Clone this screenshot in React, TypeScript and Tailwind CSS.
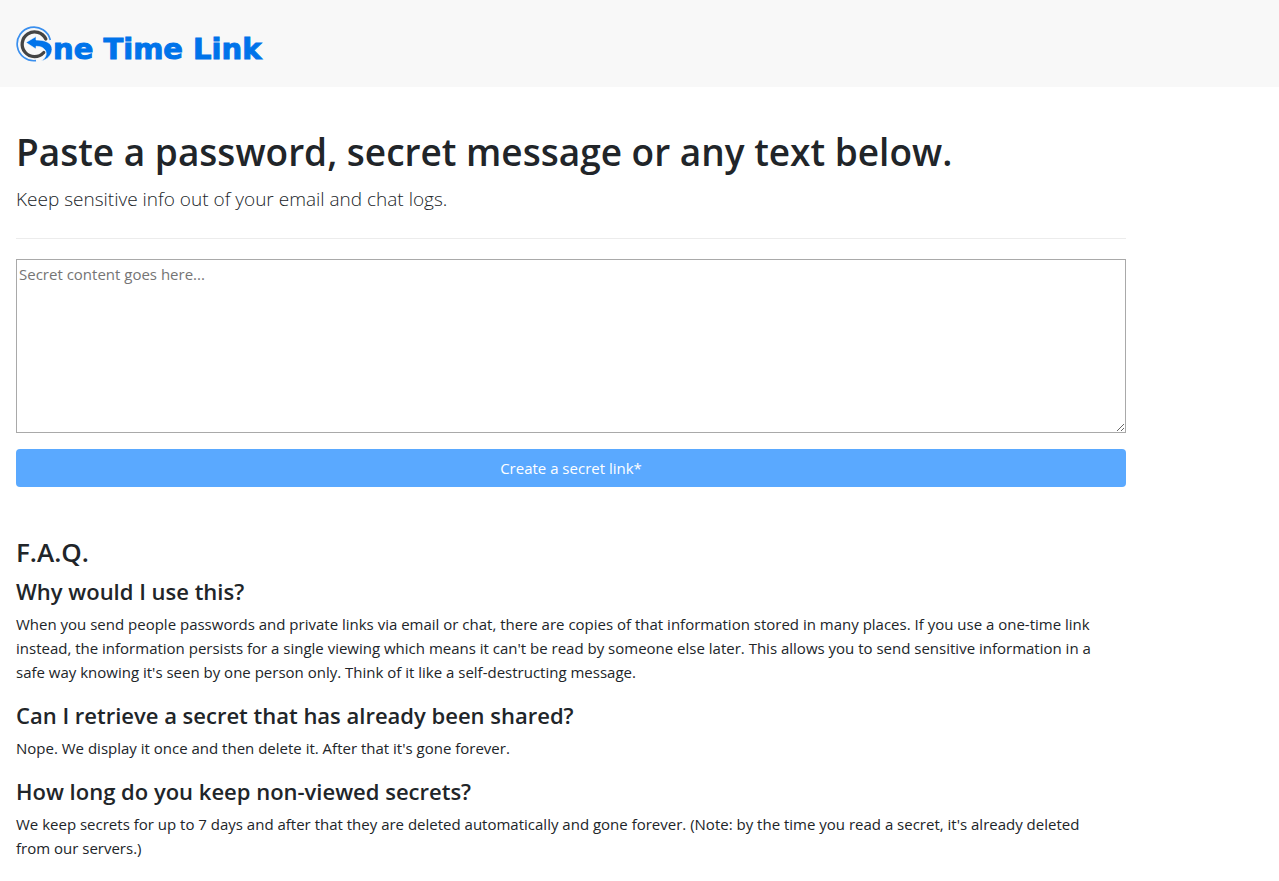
import React, { useState } from 'react';

interface Question {
  title: string;
  answer: string;
}

const questions: Question[] = [
  {
    title: 'Why would I use this?',
    answer:
      "When you send people passwords and private links via email or chat, there are copies of that information stored in many places. If you use a one-time link instead, the information persists for a single viewing which means it can't be read by someone else later. This allows you to send sensitive information in a safe way knowing it's seen by one person only. Think of it like a self-destructing message.",
  },
  {
    title: 'Can I retrieve a secret that has already been shared?',
    answer: "Nope. We display it once and then delete it. After that it's gone forever.",
  },
  {
    title: 'How long do you keep non-viewed secrets?',
    answer:
      "We keep secrets for up to 7 days and after that they are deleted automatically and gone forever. (Note: by the time you read a secret, it's already deleted from our servers.)",
  },
];

const Logo: React.FC = () => (
  <a href="/" aria-label="One Time Link" className="inline-flex items-center text-[#0073ea]">
    <svg width="37" height="38" viewBox="0 0 37 38" fill="none" aria-hidden="true">
      <path d="M34.3 15A16.8 16.8 0 1 0 20 35.6" stroke="#3a8fee" strokeWidth="1.7" />
      <path d="M29.8 14A12.4 12.4 0 1 0 27.8 27.5" stroke="#444" strokeWidth="3.3" strokeLinecap="round" />
      <path
        d="M10 17.5L20 11.5V15C28 14.8 36.5 17.5 36 24.5C35.6 30 31.5 34.5 25.5 36C30 32.8 31.5 28.5 29 25C27 22.2 24 21.3 20 21.3V24Z"
        fill="#0073ea"
        stroke="#f8f8f8"
        strokeWidth="0.6"
      />
    </svg>
    <span className="pt-2.5 font-['DejaVu_Sans',sans-serif] text-[29px] leading-8 font-bold [-webkit-text-stroke:1px_#0073ea]">
      ne Time Link
    </span>
  </a>
);

const App: React.FC = () => {
  const [secret, setSecret] = useState<string>('');

  return (
    <div className="font-['Open_Sans',sans-serif] text-[15px] leading-6 text-[#212529]">
      <header className="flex h-[87px] items-center bg-[#f8f8f8] px-4">
        <Logo />
      </header>
      <main className="box-content max-w-[1110px] px-4 pt-10 pb-5">
        <h1 className="mb-2 text-[37px] leading-[50px] font-semibold">
          Paste a password, secret message or any text below.
        </h1>
        <p className="text-[19px] leading-[29px] font-light">Keep sensitive info out of your email and chat logs.</p>
        <hr className="mt-6 mb-5 border-[#ececec]" />
        <form onSubmit={(e) => e.preventDefault()}>
          <textarea
            aria-label="Secret content"
            rows={7}
            placeholder="Secret content goes here..."
            value={secret}
            onChange={(e) => setSecret(e.target.value)}
            className="block w-full resize border border-[#a9a9a9] p-0.5 placeholder:text-[#757575]"
          />
          <button type="submit" className="mt-4 block h-[38px] w-full rounded bg-[#5aa9ff] text-white">
            Create a secret link*
          </button>
        </form>
        <section className="mt-12">
          <h2 className="mb-2 text-[26px] leading-[34px] font-semibold">F.A.Q.</h2>
          {questions.map((question) => (
            <div key={question.title} className="mb-[17px]">
              <h3 className="mb-[7px] text-[22px] leading-7 font-semibold">{question.title}</h3>
              <p className="pr-4">{question.answer}</p>
            </div>
          ))}
        </section>
      </main>
    </div>
  );
};

export default App;
